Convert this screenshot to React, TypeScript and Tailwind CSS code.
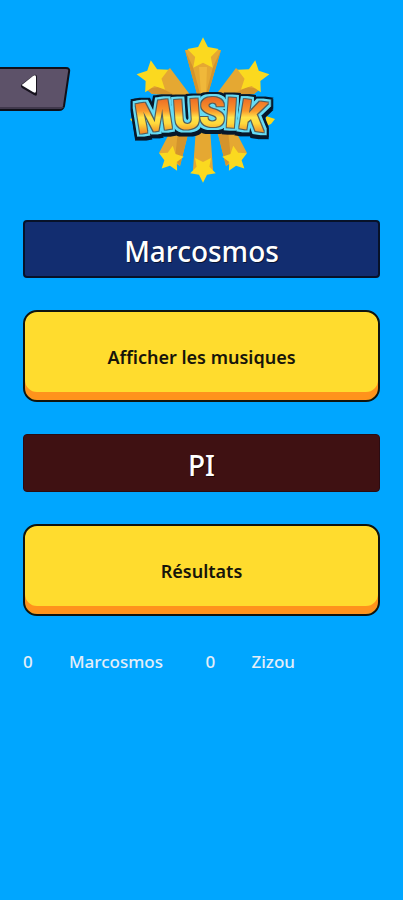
const players = [
  { name: 'Marcosmos', score: 0 },
  { name: 'Zizou', score: 0 },
]

const STAR = 'M0 -16 L5 -6 L16 -4 L8 4 L10 15 L0 10 L-10 15 L-8 4 L-16 -4 L-5 -6 Z'

const stars = [
  { x: 202, y: 53, scale: 0.98, angle: 0 },
  { x: 152, y: 76, scale: 1, angle: -8 },
  { x: 252, y: 76, scale: 1, angle: 8 },
  { x: 170, y: 158, scale: 0.78, angle: 8 },
  { x: 234, y: 158, scale: 0.78, angle: -8 },
  { x: 202, y: 170, scale: 0.8, angle: 180 },
]

function Logo() {
  return (
    <svg viewBox="121 30 160 160" className="w-40 h-40" role="img" aria-label="Musik">
      <defs>
        <linearGradient id="letters" gradientUnits="userSpaceOnUse" x1="0" y1="96" x2="0" y2="133">
          <stop offset="0" stopColor="#ea6424" />
          <stop offset="0.4" stopColor="#f9972b" />
          <stop offset="0.58" stopColor="#ffe34a" />
          <stop offset="0.74" stopColor="#ffd93c" />
          <stop offset="1" stopColor="#f28a25" />
        </linearGradient>

        {/* Dark edge, cyan rim and black rim around the word */}
        <filter
          id="rims"
          filterUnits="userSpaceOnUse"
          x="121"
          y="80"
          width="160"
          height="70"
          colorInterpolationFilters="sRGB"
        >
          <feMorphology in="SourceAlpha" operator="dilate" radius="1" result="a1" />
          <feMorphology in="SourceAlpha" operator="dilate" radius="3" result="a2" />
          <feMorphology in="SourceAlpha" operator="dilate" radius="5" result="a3" />
          <feOffset in="a3" dy="2" result="a4" />
          <feFlood floodColor="#4a2a1c" floodOpacity="0.7" />
          <feComposite in2="a1" operator="in" result="edge" />
          <feFlood floodColor="#66dcf5" />
          <feComposite in2="a2" operator="in" result="cyan" />
          <feFlood floodColor="#07182b" />
          <feComposite in2="a3" operator="in" result="rim" />
          <feFlood floodColor="#07182b" />
          <feComposite in2="a4" operator="in" result="shadow" />
          <feMerge>
            <feMergeNode in="shadow" />
            <feMergeNode in="rim" />
            <feMergeNode in="cyan" />
            <feMergeNode in="edge" />
            <feMergeNode in="SourceGraphic" />
          </feMerge>
        </filter>
      </defs>

      {/* Rays */}
      <g fill="#e5a832">
        <path d="M184 50 L220 50 L207 94 L196 94 Z" />
        <path d="M145 89 L169 68 L190 96 L151 94 Z" />
        <path d="M259 89 L235 68 L214 96 L253 94 Z" />
        <path d="M158 153 L170 130 L188 130 L179 166 Z" />
        <path d="M246 153 L234 130 L216 130 L225 166 Z" />
        <path d="M192 170 L195 128 L209 128 L212 170 Z" />
      </g>
      <g fill="#d4942c">
        <path d="M184 50 L192 67 L199 94 L196 94 Z" />
        <path d="M220 50 L212 67 L205 94 L207 94 Z" />
        <path d="M145 89 L158 87 L174 95 L151 94 Z" />
        <path d="M259 89 L246 87 L230 95 L253 94 Z" />
        <path d="M177 130 L188 130 L179 166 L174 159 Z" />
        <path d="M227 130 L216 130 L225 166 L230 159 Z" />
      </g>
      <path d="M198 67 L206 67 L205 94 L200 94 Z" fill="#f0b83a" />

      {/* Stars */}
      <g fill="#fbd91f">
        {stars.map((s) => (
          <path
            key={`${s.x}-${s.y}`}
            d={STAR}
            transform={`translate(${s.x} ${s.y}) rotate(${s.angle}) scale(${s.scale})`}
          />
        ))}
        <path d="M129 119 L138 116 L138 126 L133 124 Z" />
        <path d="M274 119 L265 116 L265 126 L270 124 Z" />
      </g>

      {/* Word */}
      <text
        x="137 173 198 223 236"
        y="134 130 127 127 128"
        rotate="-9 -4 0 4 9"
        fontFamily="Roboto, sans-serif"
        fontWeight="900"
        fontSize="42"
        fill="url(#letters)"
        filter="url(#rims)"
      >
        MUSIK
      </text>
    </svg>
  )
}

function BackButton() {
  return (
    <button type="button" aria-label="Retour" className="mt-[67px] justify-self-start">
      <svg viewBox="0 0 72 45" className="w-[72px] h-[45px]">
        <path
          d="M-3 1 H66 Q70 1 69 5 L64 39 Q63 43 59 43 H-3 Z"
          fill="#5d5269"
          stroke="#101019"
          strokeWidth="2"
        />
        <path d="M-3 40 H64 L63 41 Q62 42 59 42 H-3 Z" fill="#40384c" />
        <path
          d="M22 17 L34 8 Q37 7 37 10 V27 Q37 30 34 28 L22 21 Q20 19 22 17 Z"
          fill="#17131e"
        />
        <path
          d="M23 17 L33 9 Q36 7 36 10 V24 Q36 27 33 25 L23 19 Q21 18 23 17 Z"
          fill="#fff"
        />
      </svg>
    </button>
  )
}

function Banner({ label, color }: { label: string; color: string }) {
  return (
    <h2
      className={`h-[58px] pt-1 flex items-center justify-center rounded text-[28px] font-medium text-white [text-shadow:1px_1px_0_#0008] ${color}`}
    >
      {label}
    </h2>
  )
}

function GameButton({ label }: { label: string }) {
  return (
    <button
      type="button"
      className="h-[92px] w-full pt-[2px] rounded-[14px] border-2 border-[#10140f] bg-[#ffdc2e] text-lg font-semibold text-[#17150a] shadow-[inset_0_-8px_0_#ff931c]"
    >
      {label}
    </button>
  )
}

export default function App() {
  return (
    <div className="min-h-screen bg-[#00a6ff] font-['Noto_Sans',sans-serif]">
      <header className="grid grid-cols-[1fr_auto_1fr] items-start">
        <BackButton />
        <h1 className="mt-[30px]">
          <Logo />
        </h1>
      </header>

      <main className="flex flex-col gap-8 px-[23px] pt-[30px]">
        <Banner label="Marcosmos" color="border-2 border-[#071229] bg-[#122d70]" />
        <GameButton label="Afficher les musiques" />
        <Banner label="PI" color="border border-[#2a0c12] bg-[#3f1112]" />
        <GameButton label="Résultats" />

        {/* Scores */}
        <ul className="grid grid-cols-2 gap-x-2 text-[17px] leading-7 font-medium text-[#e4eef8]">
          {players.map((player) => (
            <li key={player.name} className="flex">
              <span className="w-[46px]">{player.score}</span>
              <span>{player.name}</span>
            </li>
          ))}
        </ul>
      </main>
    </div>
  )
}
